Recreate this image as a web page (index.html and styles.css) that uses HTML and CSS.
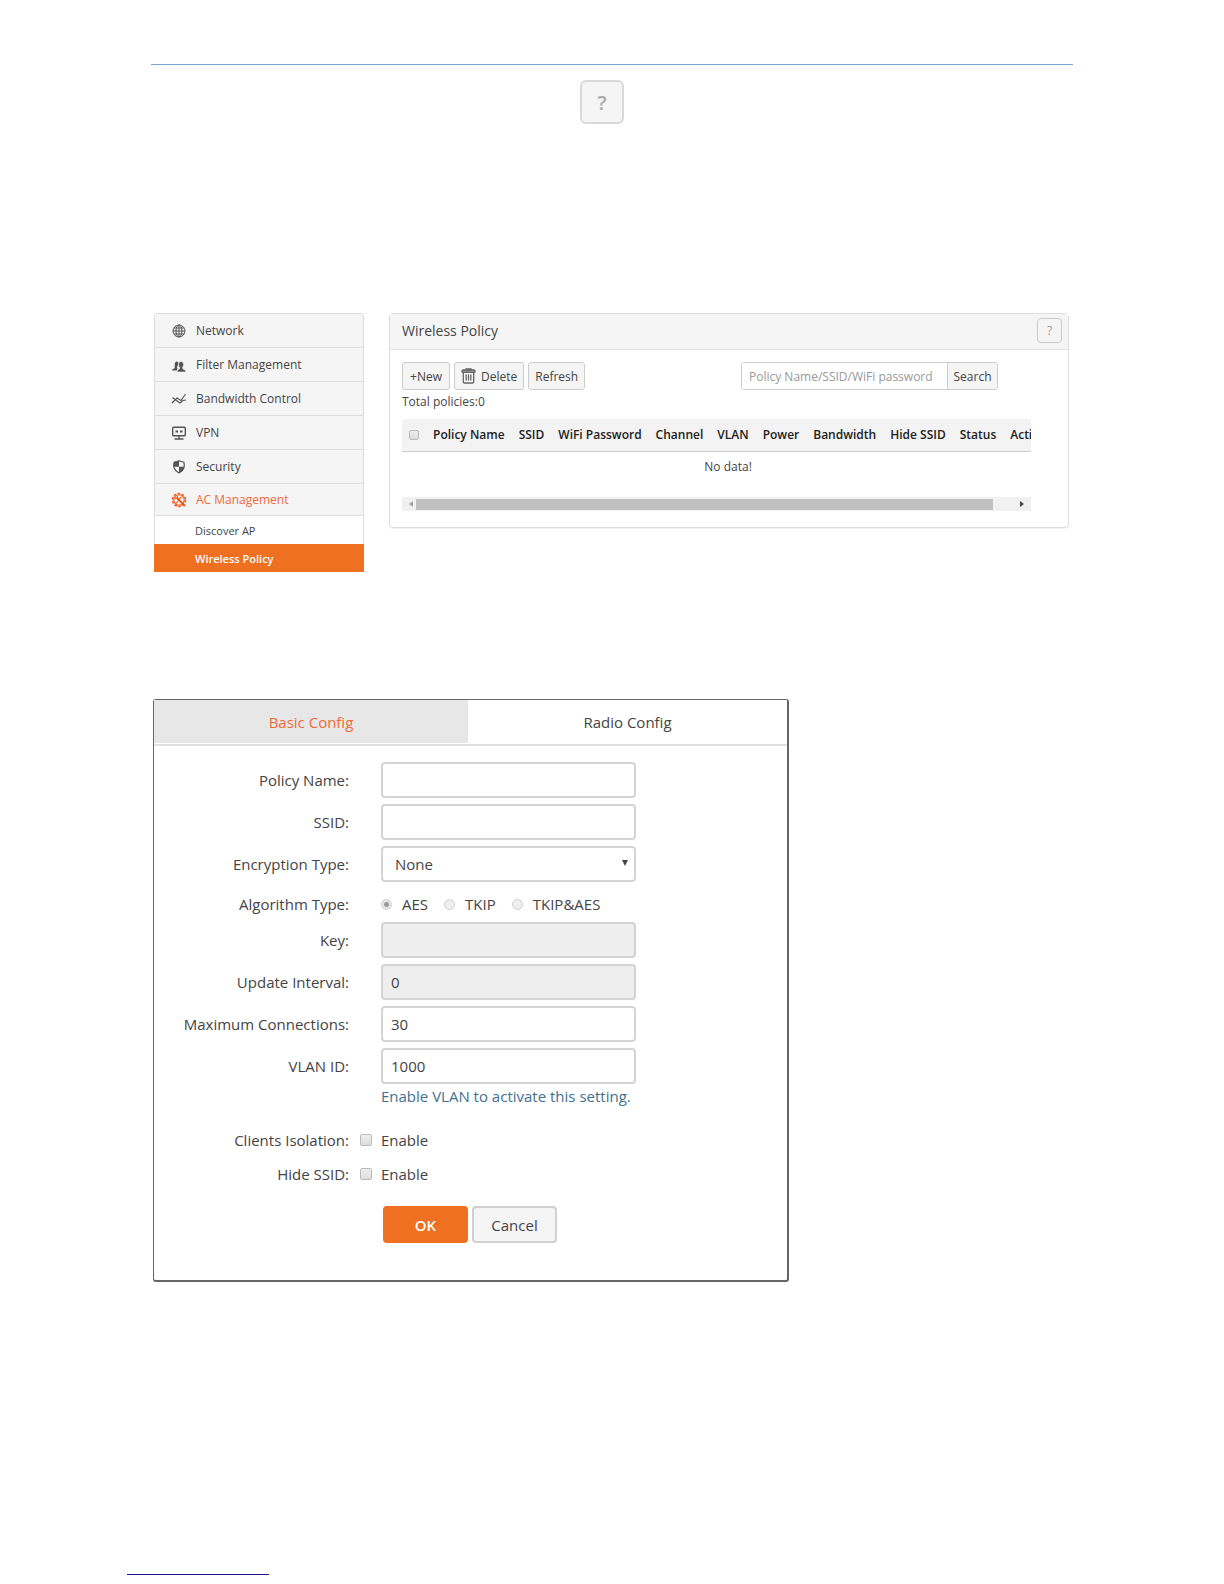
FILE: index.html
```html
<!DOCTYPE html>
<html lang="en">
<head>
    <meta charset="UTF-8">
    <meta name="viewport" content="width=device-width, initial-scale=1.0">
    <title>Wireless Policy</title>
    <link rel="stylesheet" href="styles.css">
</head>
<body>
    <div class="page">
        <header class="page-header">
            <button type="button" class="help help-large">?</button>
        </header>

        <div class="layout">
            <nav class="sidebar">
                <a href="#" class="nav-item">
                    <svg class="nav-icon" viewBox="0 0 16 16" fill="none" stroke="#555" stroke-width="1">
                        <circle cx="8" cy="8" r="6"/>
                        <ellipse cx="8" cy="8" rx="3" ry="6"/>
                        <path d="M8 2v12M2 8h12M3 5h10M3 11h10"/>
                    </svg>
                    Network
                </a>
                <a href="#" class="nav-item">
                    <svg class="nav-icon" viewBox="0 0 16 16" fill="#555">
                        <path d="M6 4.500c1 .2 1.500 1 1.300 2.200-.3 1.800-1.200 2.800-1.300 4l.5 1-.8 1.800H1c0-1.500 2.300-1.600 2.700-2.700.3-1-.3-2.300.2-4.300.3-1.400 1.100-2.200 2.100-2z"/>
                        <path stroke="#f5f5f5" stroke-width=".6" d="M10 4.500c1.600 0 2.500 1.200 2.500 3 0 1.700-.8 2.700-1.100 3.300-.1 1.900 3.600 1.600 3.600 4.200H6c0-2.600 2.800-2.300 2.700-4.200-.5-.700-1.100-1.800-1.100-3.300 0-1.800.9-3 2.400-3z"/>
                    </svg>
                    Filter Management
                </a>
                <a href="#" class="nav-item">
                    <svg class="nav-icon" viewBox="0 0 16 16" fill="none" stroke="#555" stroke-width="1.100">
                        <path d="M1 12l5-5 4 2.500L14.500 3M1.500 6.500l4 3L9 12l3-2.500 3-.5"/>
                    </svg>
                    Bandwidth Control
                </a>
                <a href="#" class="nav-item">
                    <svg class="nav-icon" viewBox="0 0 16 16" fill="none" stroke="#555" stroke-width="1.400">
                        <rect x="1.700" y="2.200" width="12.600" height="8.600" rx=".8"/>
                        <path d="M8 10.800v2.700M3.500 14h9"/>
                        <path d="M4.500 6.500h2.500M9 6.500h2.500" stroke-width="2"/>
                    </svg>
                    VPN
                </a>
                <a href="#" class="nav-item">
                    <svg class="nav-icon" viewBox="0 0 16 16" fill="#555">
                        <path fill="none" stroke="#555" stroke-width="1.200" d="M8 1.700c1.500.9 3.200 1.100 4.800 1.300.7 2.400.7 4.300.1 6-.8 2.200-2.400 3.800-4.900 5-2.500-1.200-4.100-2.800-4.900-5-.6-1.700-.6-3.600.1-6C4.800 2.800 6.500 2.600 8 1.700z"/>
                        <path d="M8 1.700v6H2.800c-.1-1.700 0-3.100.4-4.700C4.800 2.800 6.500 2.600 8 1.700zM8 7.700h5.200c-.4 3-2.200 5-5.200 6.300z"/>
                    </svg>
                    Security
                </a>
                <a href="#" class="nav-item nav-item-open">
                    <svg class="nav-icon" viewBox="0 0 16 16" fill="none" stroke="#ef5b1e">
                        <circle cx="8" cy="8" r="6.400" stroke-width="1.600" stroke-dasharray="2.500 1.500"/>
                        <circle cx="8" cy="8" r="5.200" stroke-width="1.100"/>
                        <path d="M5.500 5.500L14 14" stroke-width="2"/>
                        <path d="M4 6.500l2.500 0 0-2.500M10.500 4.500L5 11.500" stroke-width="1.200"/>
                    </svg>
                    AC Management
                </a>
                <a href="#" class="nav-sub">Discover AP</a>
                <a href="#" class="nav-sub nav-sub-active">Wireless Policy</a>
            </nav>

            <main class="panel">
                <div class="panel-header">
                    <h1>Wireless Policy</h1>
                    <button type="button" class="help">?</button>
                </div>
                <div class="panel-body">
                    <div class="toolbar">
                        <button type="button" class="btn">+New</button>
                        <button type="button" class="btn btn-delete">
                            <svg class="trash" viewBox="0 0 15 16" fill="none" stroke="#666" stroke-width="1.300">
                                <path d="M5 2V1h5v1"/>
                                <rect x="1" y="2" width="13" height="2.400" rx="1" fill="#999"/>
                                <path d="M2.300 4.500v9.500q0 1 1 1h8.400q1 0 1-1V4.500"/>
                                <path d="M5.200 6.500v6M7.500 6.500v6M9.800 6.500v6"/>
                            </svg>
                            Delete
                        </button>
                        <button type="button" class="btn">Refresh</button>
                        <form class="search">
                            <input type="text" aria-label="Search policies" placeholder="Policy Name/SSID/WiFi password">
                            <button type="button">Search</button>
                        </form>
                    </div>
                    <p class="total">Total policies:0</p>
                    <div class="table-wrap">
                        <table>
                            <thead>
                                <tr>
                                    <th class="check-cell"><input type="checkbox" class="check" aria-label="Select all"></th>
                                    <th>Policy Name</th>
                                    <th>SSID</th>
                                    <th>WiFi Password</th>
                                    <th>Channel</th>
                                    <th>VLAN</th>
                                    <th>Power</th>
                                    <th>Bandwidth</th>
                                    <th>Hide SSID</th>
                                    <th>Status</th>
                                    <th>Action</th>
                                </tr>
                            </thead>
                            <tbody>
                                <tr>
                                    <td colspan="11">No data!</td>
                                </tr>
                            </tbody>
                        </table>
                    </div>
                    <div class="scrollbar">
                        <span class="arrow arrow-left"></span>
                        <div class="track"><div class="thumb"></div></div>
                        <span class="arrow arrow-right"></span>
                    </div>
                </div>
            </main>
        </div>

        <section class="dialog">
            <div class="tabs">
                <button type="button" class="tab tab-active">Basic Config</button>
                <button type="button" class="tab">Radio Config</button>
            </div>
            <form class="config">
                <div class="row">
                    <label for="policy-name">Policy Name:</label>
                    <input type="text" id="policy-name" class="field">
                </div>
                <div class="row">
                    <label for="ssid">SSID:</label>
                    <input type="text" id="ssid" class="field">
                </div>
                <div class="row">
                    <label for="encryption">Encryption Type:</label>
                    <div class="select">
                        <select id="encryption" class="field">
                            <option>None</option>
                        </select>
                    </div>
                </div>
                <div class="row row-short" role="radiogroup" aria-labelledby="algorithm">
                    <span id="algorithm" class="label">Algorithm Type:</span>
                    <div class="radios">
                        <label><input type="radio" name="algorithm" checked disabled>AES</label>
                        <label><input type="radio" name="algorithm" disabled>TKIP</label>
                        <label><input type="radio" name="algorithm" disabled>TKIP&amp;AES</label>
                    </div>
                </div>
                <div class="row">
                    <label for="key">Key:</label>
                    <input type="text" id="key" class="field" disabled>
                </div>
                <div class="row">
                    <label for="interval">Update Interval:</label>
                    <input type="text" id="interval" class="field" value="0" disabled>
                </div>
                <div class="row">
                    <label for="connections">Maximum Connections:</label>
                    <input type="text" id="connections" class="field" value="30">
                </div>
                <div class="row">
                    <label for="vlan">VLAN ID:</label>
                    <input type="text" id="vlan" class="field" value="1000">
                </div>
                <p class="hint">Enable VLAN to activate this setting.</p>
                <div class="row row-check">
                    <span class="label">Clients Isolation:</span>
                    <label class="enable"><input type="checkbox" class="check">Enable</label>
                </div>
                <div class="row row-check">
                    <span class="label">Hide SSID:</span>
                    <label class="enable"><input type="checkbox" class="check">Enable</label>
                </div>
                <div class="actions">
                    <button type="button" class="ok">OK</button>
                    <button type="button" class="cancel">Cancel</button>
                </div>
            </form>
        </section>
    </div>
    <footer class="page-footer"></footer>
</body>
</html>
```
FILE: styles.css
```css
* {
    box-sizing: border-box;
}

body {
    margin: 0;
    background: #fff;
    color: #444;
    font-family: 'Open Sans', 'Noto Sans', sans-serif;
    font-size: 12px;
}

button,
input,
select {
    font: inherit;
    color: inherit;
}

button {
    padding: 0;
    cursor: pointer;
}

a {
    color: inherit;
    text-decoration: none;
}

.page {
    max-width: 922px;
    margin: 0 auto;
    padding-top: 64px;
}

.page-header {
    display: flex;
    justify-content: center;
    height: 249px;
    padding: 15px 20px 0 0;
    border-top: 1px solid #7ba7cf;
}

.help {
    width: 25px;
    height: 25px;
    border: 1px solid #ccc;
    border-radius: 4px;
    background: #f5f5f5;
    color: #999;
}

.help-large {
    width: 44px;
    height: 44px;
    border: 2px solid #d9d9d9;
    border-radius: 6px;
    color: #aaa;
    font-size: 20px;
    font-weight: 600;
}

.layout {
    display: flex;
    align-items: flex-start;
    gap: 25px;
    padding: 0 4px 0 3px;
}

/* Sidebar */
.sidebar {
    flex: 0 0 210px;
    border: 1px solid #ddd;
    border-bottom: 0;
    border-radius: 3px 3px 0 0;
}

.nav-item {
    display: flex;
    align-items: center;
    gap: 9px;
    height: 34px;
    padding-left: 16px;
    border-bottom: 1px solid #ddd;
    background: #f5f5f5;
}

.nav-icon {
    width: 16px;
    height: 16px;
}

.nav-item-open {
    height: 32px;
    color: #ef6a3a;
}

.nav-sub {
    display: flex;
    align-items: center;
    height: 28px;
    padding-left: 40px;
    font-size: 11px;
}

.nav-sub-active {
    margin: 0 -1px;
    padding-left: 41px;
    background: #ee7020;
    color: #fff;
    font-weight: 600;
}

/* Policy list */
.panel {
    flex: 1;
    min-width: 0;
    border: 1px solid #ddd;
    border-radius: 4px;
    box-shadow: 0 1px 1px rgba(0, 0, 0, 0.05);
}

.panel-header {
    display: flex;
    align-items: center;
    justify-content: space-between;
    height: 36px;
    padding: 0 6px 2px 12px;
    border-bottom: 1px solid #e5e5e5;
    background: #f5f5f5;
}

.panel-header h1 {
    margin: 0;
    font-size: 14px;
    font-weight: normal;
}

.panel-body {
    padding: 12px 37px 16px 12px;
}

.toolbar {
    display: flex;
    gap: 4px;
}

.btn {
    min-width: 48px;
    height: 28px;
    padding: 0 6px;
    border: 1px solid #ccc;
    border-radius: 3px;
    background: #f5f5f5;
}

.btn-delete {
    display: flex;
    align-items: center;
    gap: 5px;
}

.trash {
    width: 15px;
    height: 16px;
}

.search {
    display: flex;
    width: 257px;
    height: 28px;
    margin: 0 33px 0 auto;
    border: 1px solid #ccc;
    border-radius: 3px;
    overflow: hidden;
}

.search input {
    flex: 1;
    min-width: 0;
    padding: 0 7px;
    border: 0;
}

.search input::placeholder {
    color: #999;
}

.search button {
    width: 50px;
    border: 0;
    border-left: 1px solid #ccc;
    background: #f5f5f5;
}

.total {
    margin: 3px 0 8px;
    line-height: 18px;
}

.table-wrap {
    height: 78px;
    overflow: hidden;
}

table {
    border-collapse: collapse;
    white-space: nowrap;
}

th {
    height: 32px;
    padding: 0 7px;
    border-bottom: 1px solid #ccc;
    background: #f3f3f3;
    color: #222;
    font-weight: 600;
    text-align: left;
}

td {
    height: 30px;
    padding: 0;
    text-align: center;
}

.check {
    appearance: none;
    width: 12px;
    height: 12px;
    margin: 0;
    border: 1px solid #bbb;
    border-radius: 2px;
    background: linear-gradient(#eee, #ddd);
}

.check-cell .check {
    display: block;
    width: 10px;
    height: 10px;
}

.scrollbar {
    display: flex;
    align-items: center;
    height: 14px;
    background: #f1f1f1;
}

.arrow {
    width: 14px;
    text-align: center;
}

.arrow::before {
    content: '';
    display: block;
    width: 4px;
    margin: 0 auto;
    border: 3px solid transparent;
}

.arrow-left::before {
    border-left: 0;
    border-right: 4px solid #a3a3a3;
}

.arrow-right::before {
    border-right: 0;
    border-left: 4px solid #444;
}

.track {
    flex: 1;
}

.thumb {
    width: 96%;
    height: 11px;
    background: #c1c1c1;
}

/* Policy form */
.dialog {
    max-width: 636px;
    margin: 127px 0 0 2px;
    border: 1px solid #666;
    border-right-width: 2px;
    border-bottom-width: 2px;
    border-radius: 3px;
    font-size: 15px;
}

.tabs {
    display: flex;
    padding-bottom: 1px;
    border-bottom: 2px solid #e0e0e0;
}

.tab {
    flex: 1;
    height: 43px;
    border: 0;
    background: #fff;
}

.tab-active {
    flex: 0 0 314px;
    background: #e7e7e7;
    color: #ef6a3a;
}

.config {
    padding: 16px 0 37px;
}

.row {
    display: flex;
    align-items: center;
    gap: 32px;
    height: 36px;
    margin-bottom: 6px;
}

.row > :first-child {
    width: 195px;
    text-align: right;
}

.field {
    width: 255px;
    height: 36px;
    padding: 0 8px;
    border: 2px solid #d4d4d4;
    border-radius: 4px;
    background: #fff;
}

.field:disabled {
    background: #eee;
}

.select {
    position: relative;
}

.select .field {
    appearance: none;
    padding-left: 12px;
}

.select::after {
    content: '';
    position: absolute;
    top: 14px;
    right: 8px;
    border: 3px solid transparent;
    border-top: 6px solid #444;
    border-bottom: 0;
}

.row-short {
    height: 32px;
    margin-bottom: 2px;
}

.radios {
    display: flex;
    gap: 16px;
}

.radios label {
    display: flex;
    align-items: center;
    gap: 10px;
}

.radios input {
    appearance: none;
    width: 11px;
    height: 11px;
    margin: 0;
    border: 1px solid #d0d0d0;
    border-radius: 50%;
    background: #eee;
}

.radios input:checked {
    background: radial-gradient(circle, #999 2px, #e6e6e6 3px);
}

.hint {
    margin: -6px 0 15px 227px;
    color: #3f7190;
    line-height: 24px;
}

.row-check {
    gap: 11px;
    height: 34px;
    margin-bottom: 0;
}

.enable {
    display: flex;
    align-items: center;
    gap: 9px;
}

.actions {
    display: flex;
    gap: 4px;
    margin: 15px 0 0 229px;
}

.actions button {
    width: 85px;
    height: 37px;
    border: 2px solid #d0d0d0;
    border-radius: 4px;
    background: #f5f5f5;
}

.actions .ok {
    border-color: #ee7020;
    background: #ee7020;
    color: #fff;
    font-weight: 600;
}

/* Rule at the foot of the page */
.page-footer {
    width: 142px;
    margin: 292px 0 0 127px;
    border-bottom: 1px solid #1a1a80;
}
```
